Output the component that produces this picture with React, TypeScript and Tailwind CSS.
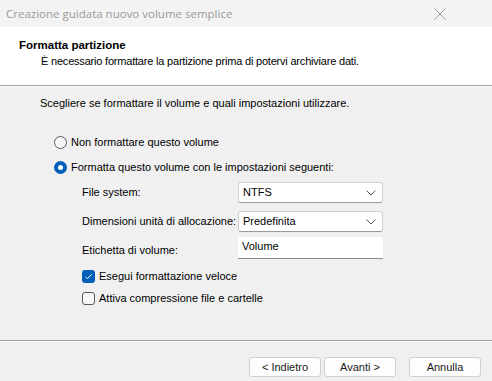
import React from 'react';

function Radio({ checked, label }: { checked?: boolean; label: string }) {
  return (
    <div className="flex items-center h-[16px]">
      {checked ? (
        <span className="w-[13px] h-[13px] rounded-full bg-[#005fb8] flex items-center justify-center">
          <span className="w-[5px] h-[5px] rounded-full bg-white" />
        </span>
      ) : (
        <span className="w-[13px] h-[13px] rounded-full border border-[#5a5a5a] bg-[#f7f7f7]" />
      )}
      <span className="ml-[4px]">{label}</span>
    </div>
  );
}

function Check({ checked, label }: { checked?: boolean; label: string }) {
  return (
    <div className="flex items-center h-[16px]">
      {checked ? (
        <span className="w-[13px] h-[13px] rounded-[3px] bg-[#005fb8] flex items-center justify-center">
          <svg width="9" height="9" viewBox="0 0 9 9" fill="none">
            <path d="M1.5 4.8 L3.5 6.6 L7.5 2.4" stroke="white" strokeWidth="1" />
          </svg>
        </span>
      ) : (
        <span className="w-[13px] h-[13px] rounded-[3px] border border-[#5a5a5a] bg-[#f7f7f7]" />
      )}
      <span className="ml-[4px]">{label}</span>
    </div>
  );
}

function Select({ value }: { value: string }) {
  return (
    <div className="w-[145px] h-[21px] bg-white border border-[#d0d0d0] border-b-[#9a9a9a] rounded-[3px] flex items-center justify-between pl-[4px] pr-[6px]">
      <span>{value}</span>
      <svg width="10" height="6" viewBox="0 0 10 6" fill="none">
        <path d="M0.5 0.5 L5 5 L9.5 0.5" stroke="#555" strokeWidth="1" />
      </svg>
    </div>
  );
}

function Button({ label }: { label: string }) {
  return (
    <button className="w-[72px] h-[20px] bg-[#fdfdfd] border border-[#d0d0d0] rounded-[3px] text-[#1a1a1a] flex items-center justify-center">
      {label}
    </button>
  );
}

export default function App() {
  return (
    <div className="w-[492px] h-[381px] bg-[#f0f0f0] flex flex-col text-[11px] text-black overflow-hidden" style={{ fontFamily: '"Liberation Sans", Arial, sans-serif' }}>
      <div className="h-[27px] bg-[#f3f3f3] flex items-center justify-between pl-[6px] pr-[46px]">
        <span className="text-[#9a9a9a] text-[11.5px]" style={{ fontFamily: '"Open Sans", "Noto Sans", sans-serif' }}>Creazione guidata nuovo volume semplice</span>
        <svg width="12" height="12" viewBox="0 0 12 12" fill="none">
          <path d="M0.5 0.5 L11.5 11.5 M11.5 0.5 L0.5 11.5" stroke="#9a9a9a" strokeWidth="1" />
        </svg>
      </div>
      <div className="h-[59px] bg-white border-b border-[#a0a0a0] pt-[11px] pl-[19px]">
        <div className="font-bold leading-[14px] text-[11.5px]">Formatta partizione</div>
        <div className="pl-[22px] leading-[16px] mt-[1px] tracking-[-0.2px]">È necessario formattare la partizione prima di potervi archiviare dati.</div>
      </div>
      <div className="h-px bg-white" />
      <div className="flex-1 flex flex-col px-[40px]">
        <div className="mt-[8px] h-[16px] leading-[16px]">Scegliere se formattare il volume e quali impostazioni utilizzare.</div>
        <div className="ml-[14px] mt-[23px] flex flex-col gap-[9px]">
          <Radio label="Non formattare questo volume" />
          <Radio checked label="Formatta questo volume con le impostazioni seguenti:" />
        </div>
        <div className="ml-[42px] mt-[7px] flex flex-col">
          <div className="flex items-center">
            <span className="w-[156px]">File system:</span>
            <Select value="NTFS" />
          </div>
          <div className="flex items-center mt-[8px]">
            <span className="w-[156px]">Dimensioni unità di allocazione:</span>
            <Select value="Predefinita" />
          </div>
          <div className="flex items-center mt-[5px]">
            <span className="w-[156px] pt-[4px]">Etichetta di volume:</span>
            <div className="w-[145px] h-[22px] bg-white border-b border-[#8a8a8a] pl-[4px] pt-[1px]">Volume</div>
          </div>
          <div className="mt-[9px] flex flex-col gap-[6px]">
            <Check checked label="Esegui formattazione veloce" />
            <Check label="Attiva compressione file e cartelle" />
          </div>
        </div>
      </div>
      <div className="h-px bg-[#a0a0a0]" />
      <div className="h-px bg-white" />
      <div className="h-[39px] flex items-start pt-[15px] pl-[249px]">
        <Button label="< Indietro" />
        <div className="ml-[3px]"><Button label="Avanti >" /></div>
        <div className="ml-[13px]"><Button label="Annulla" /></div>
      </div>
    </div>
  );
}
